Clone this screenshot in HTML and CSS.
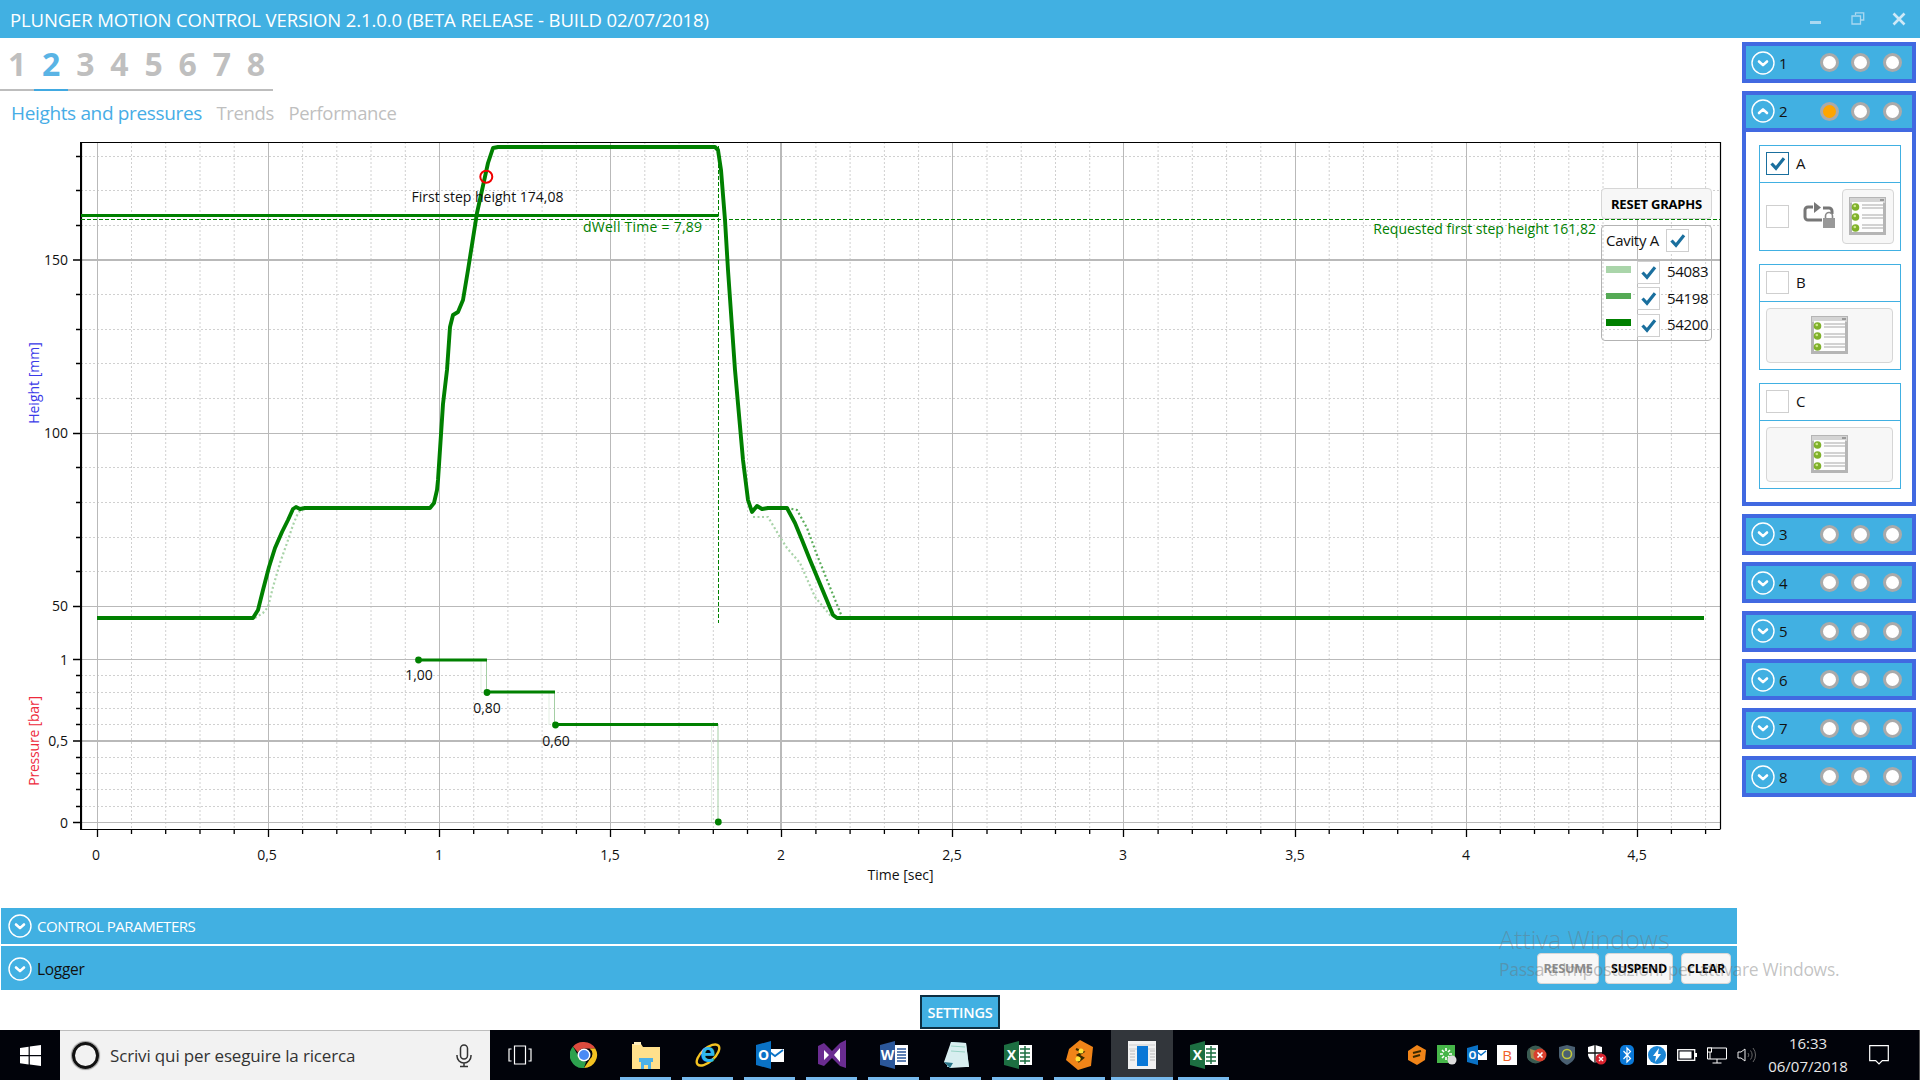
FILE: index.html
```html
<!DOCTYPE html>
<html lang="it">
<head>
<meta charset="utf-8">
<title>Plunger Motion Control</title>
<link rel="stylesheet" href="styles.css">
</head>
<body>
<svg class="defs" width="0" height="0" aria-hidden="true">
  <symbol id="chev-down" viewBox="0 0 24 24"><circle cx="12" cy="12" r="11" fill="none" stroke="#fff" stroke-width="1.4"/><path d="M8 10.5l4 3.6 4-3.6" fill="none" stroke="#fff" stroke-width="2.6" stroke-linecap="round" stroke-linejoin="round"/></symbol>
  <symbol id="chev-up" viewBox="0 0 24 24"><circle cx="12" cy="12" r="11" fill="none" stroke="#fff" stroke-width="1.4"/><path d="M8 14l4-3.6 4 3.6" fill="none" stroke="#fff" stroke-width="2.6" stroke-linecap="round" stroke-linejoin="round"/></symbol>
  <symbol id="check" viewBox="0 0 23 23"><path d="M5.5 11.5l4.5 4.8 8-10" fill="none" stroke="#1a6f9e" stroke-width="3.2"/></symbol>
  <symbol id="list" viewBox="0 0 38 38">
    <rect x="0" y="0" width="37" height="38" fill="#b5b5b5"/>
    <rect x="1" y="1" width="35" height="5" fill="#d4d4d4"/>
    <rect x="31" y="2" width="4" height="2" fill="#999"/>
    <rect x="3" y="5" width="31" height="30" fill="#fdfdfd"/>
    <path d="M13 8h21M13 11h21M13 18h21M13 21h21M13 28h21M13 31h21" stroke="#c4c4c4" stroke-width="1.4"/>
    <circle cx="6.5" cy="10" r="3.8" fill="#7fb12b"/><circle cx="6.5" cy="20" r="3.8" fill="#7fb12b"/><circle cx="6.5" cy="31" r="3.8" fill="#7fb12b"/>
    <circle cx="5.8" cy="9" r="1.3" fill="#cfe88a"/><circle cx="5.8" cy="19" r="1.3" fill="#cfe88a"/><circle cx="5.8" cy="30" r="1.3" fill="#cfe88a"/>
  </symbol>
</svg>

<div class="app">
  <header class="titlebar">
    <span class="title">PLUNGER MOTION CONTROL VERSION 2.1.0.0 (BETA RELEASE - BUILD 02/07/2018)</span>
    <div class="winctl">
      <svg width="14" height="14" viewBox="0 0 14 14"><rect x="1" y="9" width="11" height="3" fill="#a9d8f1"/></svg>
      <svg width="14" height="14" viewBox="0 0 14 14"><path d="M4.5 3V.8h8.2V8H10M1 4h8.5v8H1z" fill="none" stroke="#a9d8f1" stroke-width="1.3"/></svg>
      <svg width="14" height="14" viewBox="0 0 14 14"><path d="M1.5 1.500l11 11M12.500 1.500l-11 11" stroke="#cfe9f7" stroke-width="2.6"/></svg>
    </div>
  </header>

  <div class="main">
    <section class="content">
      <nav class="tabs">
        <span class="tab">1</span><span class="tab active">2</span><span class="tab">3</span><span class="tab">4</span><span class="tab">5</span><span class="tab">6</span><span class="tab">7</span><span class="tab">8</span>
      </nav>
      <nav class="subtabs">
        <span class="subtab active">Heights and pressures</span><span class="subtab">Trends</span><span class="subtab">Performance</span>
      </nav>

      <div class="chart">
        <svg class="plot" width="1738" height="772" viewBox="0 136 1738 772">
          <!-- minor grid -->
          <path class="grid-minor" d="M131.5 142V829M165.7 142V829M200 142V829M234.2 142V829M302.6 142V829M336.8 142V829M371 142V829M405.3 142V829M473.7 142V829M507.9 142V829M542.1 142V829M576.4 142V829M644.8 142V829M679 142V829M713.3 142V829M747.5 142V829M815.9 142V829M850.1 142V829M884.4 142V829M918.6 142V829M987 142V829M1021.2 142V829M1055.5 142V829M1089.7 142V829M1158.1 142V829M1192.3 142V829M1226.6 142V829M1260.8 142V829M1329.2 142V829M1363.4 142V829M1397.7 142V829M1431.9 142V829M1500.3 142V829M1534.5 142V829M1568.8 142V829M1603 142V829M1671.4 142V829M1705.6 142V829"/>
          <path class="grid-minor" d="M81 156.5H1720M81 190.5H1720M81 225.5H1720M81 294.5H1720M81 329.5H1720M81 363.5H1720M81 398.5H1720M81 467.5H1720M81 502.5H1720M81 537.5H1720M81 571.5H1720M81 675.5H1720M81 692.5H1720M81 708.5H1720M81 724.5H1720M81 757.5H1720M81 773.5H1720M81 789.5H1720M81 806.5H1720"/>
          <!-- major grid -->
          <path class="grid-major" d="M97.5 142V829M268.5 142V829M439.5 142V829M610.5 142V829M952.5 142V829M1123.5 142V829M1295.5 142V829M1466.5 142V829M1637.5 142V829"/>
          <path class="grid-major" d="M81 433.5H1720M81 606.5H1720M81 659.5H1720M81 822.5H1720"/>
          <path class="grid-major thick" d="M781 142V829M81 260H1720M81 741H1720"/>

          <!-- axes ticks -->
          <path class="tick" d="M73 260H81M73 433.5H81M73 606.5H81M73 659.5H81M73 741H81M73 822.5H81"/>
          <path class="tick" d="M76 156.5H81M76 190.5H81M76 225.5H81M76 294.5H81M76 329.5H81M76 363.5H81M76 398.5H81M76 467.5H81M76 502.5H81M76 537.5H81M76 571.5H81M76 675.5H81M76 692.5H81M76 708.5H81M76 724.5H81M76 757.5H81M76 773.5H81M76 789.5H81M76 806.5H81"/>
          <path class="tick" d="M97.5 829V837M268.5 829V837M439.5 829V837M610.5 829V837M781.5 829V837M952.5 829V837M1123.5 829V837M1295.5 829V837M1466.5 829V837M1637.5 829V837"/>
          <path class="tick" d="M131.5 829V834M165.7 829V834M200 829V834M234.2 829V834M302.6 829V834M336.8 829V834M371 829V834M405.3 829V834M473.7 829V834M507.9 829V834M542.1 829V834M576.4 829V834M644.8 829V834M679 829V834M713.3 829V834M747.5 829V834M815.9 829V834M850.1 829V834M884.4 829V834M918.6 829V834M987 829V834M1021.2 829V834M1055.5 829V834M1089.7 829V834M1158.1 829V834M1192.3 829V834M1226.6 829V834M1260.8 829V834M1329.2 829V834M1363.4 829V834M1397.7 829V834M1431.9 829V834M1500.3 829V834M1534.5 829V834M1568.8 829V834M1603 829V834M1671.4 829V834M1705.6 829V834"/>
          <path class="frame" d="M81 142.500H1720.500V829M81.500 142V829.500H1720.500"/>
          <path class="frame-left" d="M81 142V830"/>

          <!-- y labels -->
          <g class="ylab">
            <text x="68" y="265">150</text><text x="68" y="438">100</text><text x="68" y="611">50</text>
            <text x="68" y="665">1</text><text x="68" y="746">0,5</text><text x="68" y="828">0</text>
          </g>
          <text class="ytitle h" transform="translate(39 383) rotate(-90)">Height [mm]</text>
          <text class="ytitle p" transform="translate(39 741) rotate(-90)">Pressure [bar]</text>

          <!-- x labels -->
          <g class="xlab">
            <text x="96" y="860">0</text><text x="267" y="860">0,5</text><text x="439" y="860">1</text><text x="610" y="860">1,5</text><text x="781" y="860">2</text><text x="952" y="860">2,5</text><text x="1123" y="860">3</text><text x="1295" y="860">3,5</text><text x="1466" y="860">4</text><text x="1637" y="860">4,5</text>
            <text x="900.500" y="880">Time [sec]</text>
          </g>

          <!-- reference lines -->
          <path class="dash" d="M81 219.500H1720M718.500 146V623"/>
          <path class="dwell" d="M81 215.500H718.500"/>

          <!-- ghost traces -->
          <path class="ghost light" d="M255 618L263 613 268 607 273 587 280 563 287 543 293 525 298 513 302 509M753 517L768 517 780 537 787 548 800 563 815 597 830 615 837 618"/>
          <path class="ghost mid" d="M787 508L797 510 807 528 817 555 842 617 845 618"/>

          <!-- main trace -->
          <path class="trace" d="M97 618H253L258 610 263 590 269 567 275 548 282 532 288 520 293 509 296 507 300 509 305 508H430L434 503 437 490 438 480 443 404 447 370 450 327 453 315 458 312 463 300 468 270 477 213 488 163 493 148 498 147H715L718 150 721 170 725 220 728 270 735 370 743 460 748 500 752 512 757 506 762 509 768 508H787L795 523 802 540 810 560 833 615 837 618H1704"/>

          <!-- pressure steps -->
          <path class="step-ghost" d="M481 660V692M549 692V725M711.500 725V822"/>
          <path class="step-thin" d="M486.500 660V692M554.500 692V725M718 725V822"/>
          <path class="step" d="M418 660H487M487 692H555M555 724.500H718"/>
          <circle class="pt" cx="418.500" cy="660" r="3.400"/><circle class="pt" cx="487" cy="692.500" r="3.400"/><circle class="pt" cx="555.500" cy="725" r="3.400"/><circle class="pt" cx="718.300" cy="822" r="3.400"/>
          <g class="note">
            <text x="419" y="680">1,00</text><text x="487" y="713">0,80</text><text x="556" y="746">0,60</text>
            <text x="487.500" y="202">First step height 174,08</text>
          </g>
          <circle class="mark" cx="486.300" cy="176.800" r="6"/>
          <text class="gtext dw" x="583" y="232">dWell Time = 7,89</text>
          <text class="gtext end" x="1596" y="234">Requested first step height 161,82</text>
        </svg>

        <div class="legend-wrap">
          <button class="btn reset" type="button">RESET GRAPHS</button>
          <div class="legend">
            <div class="leg-head"><span class="leg-name">Cavity A</span><span class="cb"><svg width="23" height="23"><use href="#check"/></svg></span></div>
            <div class="leg-row"><i class="sw s1"></i><span class="cb"><svg width="23" height="23"><use href="#check"/></svg></span><span>54083</span></div>
            <div class="leg-row"><i class="sw s2"></i><span class="cb"><svg width="23" height="23"><use href="#check"/></svg></span><span>54198</span></div>
            <div class="leg-row"><i class="sw s3"></i><span class="cb"><svg width="23" height="23"><use href="#check"/></svg></span><span>54200</span></div>
          </div>
        </div>
      </div>

      <div class="expander">
        <svg width="24" height="24"><use href="#chev-down"/></svg><span class="exp-t white">CONTROL PARAMETERS</span>
      </div>
      <div class="expander logger">
        <svg width="24" height="24"><use href="#chev-down"/></svg><span class="exp-t">Logger</span>
        <div class="log-btns">
          <button class="btn off" type="button">RESUME</button><button class="btn w68" type="button">SUSPEND</button><button class="btn w50" type="button">CLEAR</button>
        </div>
      </div>
    </section>

    <aside class="sidebar">
      <div class="panel"><div class="p-head"><svg width="24" height="24"><use href="#chev-down"/></svg><span class="p-num">1</span><div class="dots"><i></i><i></i><i></i></div></div></div>

      <div class="panel open">
        <div class="p-head"><svg width="24" height="24"><use href="#chev-up"/></svg><span class="p-num">2</span><div class="dots"><i class="on"></i><i></i><i></i></div></div>
        <div class="p-body">
          <div class="card">
            <div class="c-head"><span class="cb dark"><svg width="23" height="23"><use href="#check"/></svg></span><span class="c-name">A</span></div>
            <div class="c-body">
              <span class="cb"></span>
              <svg class="loop" width="32" height="28" viewBox="0 0 32 28">
                <path d="M10 5H5a3 3 0 0 0-3 3v7a3 3 0 0 0 3 3h14M20 6h6a3 3 0 0 1 3 3v3" fill="none" stroke="#777" stroke-width="3"/>
                <path d="M11 0l7 5.500-7 5.500z" fill="#777"/>
                <path d="M22.500 16v-2a3.500 3.500 0 0 1 7 0v2" fill="none" stroke="#888" stroke-width="1.600"/>
                <rect x="20" y="16" width="12" height="10" fill="#999"/>
              </svg>
              <button class="btn icon small" type="button"><svg width="38" height="38"><use href="#list"/></svg></button>
            </div>
          </div>
          <div class="card">
            <div class="c-head"><span class="cb"></span><span class="c-name">B</span></div>
            <div class="c-body"><button class="btn icon" type="button"><svg width="38" height="38"><use href="#list"/></svg></button></div>
          </div>
          <div class="card">
            <div class="c-head"><span class="cb"></span><span class="c-name">C</span></div>
            <div class="c-body"><button class="btn icon" type="button"><svg width="38" height="38"><use href="#list"/></svg></button></div>
          </div>
        </div>
      </div>

      <div class="panel"><div class="p-head"><svg width="24" height="24"><use href="#chev-down"/></svg><span class="p-num">3</span><div class="dots"><i></i><i></i><i></i></div></div></div>
      <div class="panel"><div class="p-head"><svg width="24" height="24"><use href="#chev-down"/></svg><span class="p-num">4</span><div class="dots"><i></i><i></i><i></i></div></div></div>
      <div class="panel"><div class="p-head"><svg width="24" height="24"><use href="#chev-down"/></svg><span class="p-num">5</span><div class="dots"><i></i><i></i><i></i></div></div></div>
      <div class="panel"><div class="p-head"><svg width="24" height="24"><use href="#chev-down"/></svg><span class="p-num">6</span><div class="dots"><i></i><i></i><i></i></div></div></div>
      <div class="panel"><div class="p-head"><svg width="24" height="24"><use href="#chev-down"/></svg><span class="p-num">7</span><div class="dots"><i></i><i></i><i></i></div></div></div>
      <div class="panel"><div class="p-head"><svg width="24" height="24"><use href="#chev-down"/></svg><span class="p-num">8</span><div class="dots"><i></i><i></i><i></i></div></div></div>
    </aside>
  </div>

  <div class="settings-row"><button class="settings" type="button">SETTINGS</button></div>

  <footer class="taskbar">
    <div class="start">
      <svg width="21" height="21" viewBox="0 0 21 21"><path d="M0 3l8.600-1.200v8.200H0zM9.800 1.600L21 0v10H9.800zM0 11.200h8.600v8.200L0 18.200zM9.800 11.200H21V21L9.800 19.400z" fill="#fff"/></svg>
    </div>
    <div class="search">
      <span class="ring"></span>
      <span class="search-t">Scrivi qui per eseguire la ricerca</span>
      <svg class="mic" width="16" height="24" viewBox="0 0 16 24"><rect x="4.500" y="1" width="7" height="14" rx="3.500" fill="none" stroke="#333" stroke-width="1.500"/><path d="M1 11v1a7 7 0 0 0 14 0v-1M8 19v3M4 22.500h8" fill="none" stroke="#333" stroke-width="1.500"/></svg>
    </div>
    <div class="tb-view">
      <svg width="24" height="20" viewBox="0 0 24 20"><path d="M6.500 1h11v18h-11zM3.500 4H1v12h2.500M20.500 4H23v12h-2.500" fill="none" stroke="#fff" stroke-width="1.200"/></svg>
    </div>
    <div class="tb">
      <svg width="28" height="28" viewBox="0 0 28 28"><path d="M14 1a13 13 0 0 1 11.300 6.500H14a6.500 6.500 0 0 0-6 4L3 5.500A13 13 0 0 1 14 1z" fill="#dd4b3e"/><path d="M25.300 7.500A13 13 0 0 1 14 27l6-9a6.500 6.500 0 0 0-.5-10.500z" fill="#f3c221"/><path d="M3 5.500l5.600 10a6.500 6.500 0 0 0 7.500 5L14 27A13 13 0 0 1 3 5.500z" fill="#2da14e"/><circle cx="14" cy="14" r="6.500" fill="#fff"/><circle cx="14" cy="14" r="5" fill="#4a8af4"/></svg>
    </div>
    <div class="tb open">
      <svg width="28" height="28" viewBox="0 0 28 28"><path d="M0 3h9l2 3h17v22H0z" fill="#ffe08c"/><path d="M2 1h7v3H2z" fill="#ffeebc"/><path d="M9 17h10v11h-3v-4h-4v4H9z" fill="#4db2e8"/><path d="M7 17h14v4H7z" fill="#4db2e8"/></svg>
    </div>
    <div class="tb open">
      <svg width="30" height="30" viewBox="0 0 30 30"><ellipse cx="15" cy="15" rx="14" ry="6.500" transform="rotate(-42 15 15)" fill="none" stroke="#f3c221" stroke-width="2.400"/><text class="ie" x="15" y="22">e</text></svg>
    </div>
    <div class="tb open">
      <svg width="28" height="28" viewBox="0 0 28 28"><rect x="10" y="8" width="18" height="13" fill="#fff"/><path d="M11 9l8 6 8-6" fill="none" stroke="#0a72c6" stroke-width="1.800"/><path d="M0 4l15-4v28L0 24z" fill="#0a72c6"/><text class="ico-l" x="7.500" y="19">O</text></svg>
    </div>
    <div class="tb open">
      <svg width="28" height="30" viewBox="0 0 28 30"><path d="M0 6l6-3 8 8 8-8 6-3v28l-6-2-8-8-8 8-6-2z" fill="#6a2c91"/><path d="M6 10v10l5-5zM22 8l-6 7 6 7z" fill="#fff"/></svg>
    </div>
    <div class="tb open">
      <svg width="28" height="28" viewBox="0 0 28 28"><rect x="12" y="4" width="16" height="20" fill="#fff"/><path d="M17 8h9M17 11h9M17 14h9M17 17h9M17 20h9" stroke="#2b579a" stroke-width="1.500"/><path d="M0 4l15-4v28L0 24z" fill="#2b579a"/><text class="ico-l" x="7.500" y="18.500">W</text></svg>
    </div>
    <div class="tb open">
      <svg width="28" height="30" viewBox="0 0 28 30"><path d="M9 2l15 1 3 24-22 0z" fill="#9fd0d8"/><path d="M9 2L2 22l6 6 16-1L27 27 24 3z" fill="#d8eef0"/><path d="M9 6l14 1M9 11l14 1" stroke="#8cb" stroke-width=".8"/><path d="M2 22l6 6 3-5z" fill="#28758a"/></svg>
    </div>
    <div class="tb open">
      <svg width="28" height="28" viewBox="0 0 28 28"><rect x="12" y="4" width="16" height="20" fill="#fff"/><path d="M16 8h10M16 12h10M16 16h10M16 20h10M21 5v18" stroke="#1d6f42" stroke-width="1.500"/><path d="M0 4l15-4v28L0 24z" fill="#1d6f42"/><text class="ico-l" x="7.500" y="18.500">X</text></svg>
    </div>
    <div class="tb open">
      <svg width="30" height="30" viewBox="0 0 30 30"><path d="M15 0l13 7-2 19-13 4L1 20 4 9z" fill="#f08418"/><path d="M11 9l7 3-5 3 5 3-5 4" fill="none" stroke="#3a2a00" stroke-width="2.200"/><circle cx="16" cy="11" r="2.500" fill="#ffe23a"/><circle cx="13" cy="19" r="2.500" fill="#ffe23a"/></svg>
    </div>
    <div class="tb open active">
      <svg width="28" height="28" viewBox="0 0 28 28"><rect width="28" height="28" fill="#f1f1f1"/><path d="M1 4h26M1 8h26" stroke="#ccc"/><rect x="9" y="5" width="11" height="20" fill="#0a78d7"/><path d="M2 10h5M2 13h5M2 16h5M2 19h5M22 10h5M22 13h5M22 16h5M22 19h5" stroke="#bbb"/></svg>
    </div>
    <div class="tb open">
      <svg width="28" height="28" viewBox="0 0 28 28"><rect x="12" y="4" width="16" height="20" fill="#fff"/><path d="M16 8h10M16 12h10M16 16h10M16 20h10M21 5v18" stroke="#1d6f42" stroke-width="1.500"/><path d="M0 4l15-4v28L0 24z" fill="#1d6f42"/><text class="ico-l" x="7.500" y="18.500">X</text></svg>
    </div>

    <div class="tray">
      <span class="ti"><svg width="20" height="20" viewBox="0 0 20 20"><path d="M10 0l9 5-1 10-8 5-9-5V6z" fill="#f08418"/><path d="M6 8l8-2M6 12l7-2" stroke="#3a2a00" stroke-width="2"/></svg></span>
      <span class="ti"><svg width="20" height="20" viewBox="0 0 20 20"><rect width="18" height="18" fill="#46b649"/><path d="M9 3v3M9 12v3M3 9h3M12 9h3M5 5l2 2M11 11l2 2M13 5l-2 2M7 11l-2 2" stroke="#fff" stroke-width="1.600"/><circle cx="15" cy="15" r="4.500" fill="#ddd"/></svg></span>
      <span class="ti"><svg width="20" height="20" viewBox="0 0 20 20"><rect x="8" y="5" width="12" height="10" fill="#fff"/><path d="M9 6l5 4 5-4" fill="none" stroke="#0a72c6" stroke-width="1.400"/><path d="M0 3l11-3v20L0 17z" fill="#0a72c6"/><text class="ico-s" x="5.500" y="13.500">O</text></svg></span>
      <span class="ti"><svg width="20" height="20" viewBox="0 0 20 20"><rect width="20" height="20" fill="#fff"/><text class="ico-b" x="10" y="15.500">B</text></svg></span>
      <span class="ti"><svg width="20" height="20" viewBox="0 0 20 20"><circle cx="8.500" cy="9.500" r="9" fill="#3a5b52"/><path d="M3 4l7 2-3 5 3 5-6-3z" fill="#a98b4e"/><circle cx="13" cy="10" r="6.500" fill="#d9402e"/><path d="M10.500 7.500l5 5M15.500 7.500l-5 5" stroke="#fff" stroke-width="1.600"/></svg></span>
      <span class="ti"><svg width="18" height="20" viewBox="0 0 18 20"><path d="M1 2l8-2 8 2v9c0 4-4 7-8 9-4-2-8-5-8-9z" fill="#4a6072"/><circle cx="9" cy="9" r="4.500" fill="none" stroke="#c3c83c" stroke-width="1.600"/></svg></span>
      <span class="ti"><svg width="20" height="20" viewBox="0 0 20 20"><path d="M1 2l7-2 7 2v7c0 4-3 7-7 9-4-2-7-5-7-9z" fill="#fff"/><path d="M8 0v18M1 8h14" stroke="#111" stroke-width="1.300"/><circle cx="14" cy="14" r="5.500" fill="#d9232e"/><path d="M12 12l4 4M16 12l-4 4" stroke="#fff" stroke-width="1.400"/></svg></span>
      <span class="ti"><svg width="14" height="20" viewBox="0 0 14 20"><rect width="14" height="20" rx="5" fill="#0a78d7"/><path d="M3.500 6l7 7.500L7 17V3l3.500 3.500-7 7.500" fill="none" stroke="#fff" stroke-width="1.200"/></svg></span>
      <span class="ti"><svg width="20" height="20" viewBox="0 0 20 20"><rect width="20" height="20" fill="#fff"/><circle cx="10" cy="10" r="9" fill="#1b86d6"/><path d="M12 3L6 11h3l-1 6 6-8h-3z" fill="#fff"/></svg></span>
      <span class="ti"><svg width="20" height="12" viewBox="0 0 20 12"><rect x=".7" y=".7" width="17" height="10.600" fill="none" stroke="#fff" stroke-width="1.300"/><rect x="2.500" y="2.500" width="12" height="7" fill="#fff"/><rect x="18" y="4" width="2" height="4" fill="#fff"/></svg></span>
      <span class="ti"><svg width="20" height="17" viewBox="0 0 20 17"><path d="M.5 1h19v11H.5zM3 12V4M5.500 16h9M10 12v4" fill="none" stroke="#fff" stroke-width="1"/><rect x=".5" y="1" width="4" height="4" fill="#000" stroke="#fff"/></svg></span>
      <span class="ti"><svg width="20" height="16" viewBox="0 0 20 16"><path d="M1 5h3l4-3v12l-4-3H1z" fill="none" stroke="#eee"/><path d="M11 6a3 3 0 0 1 0 4M13.500 3.500a7 7 0 0 1 0 9M16 1a11 11 0 0 1 0 14" fill="none" stroke="#666"/></svg></span>
    </div>
    <div class="clock"><span>16:33</span><span>06/07/2018</span></div>
    <div class="notif"><svg width="20" height="20" viewBox="0 0 20 20"><path d="M.7.7h18.600v15h-6L10 19l-3.300-3.300h-6z" fill="none" stroke="#fff" stroke-width="1.200"/></svg></div>
    <div class="desk"></div>
  </footer>

  <div class="watermark"><span class="wm1">Attiva Windows</span><span class="wm2">Passa a Impostazioni per attivare Windows.</span></div>
</div>
</body>
</html>
```

FILE: styles.css
```css
* { box-sizing: border-box; }
html, body { margin: 0; padding: 0; height: 100%; background: #fff; }
body { font-family: "Open Sans", "Noto Sans", sans-serif; color: #111; overflow: hidden; }
.defs { position: absolute; }
svg { display: block; flex: none; }

.app { width: 1920px; height: 1080px; display: flex; flex-direction: column; position: relative; }

.titlebar { height: 38px; background: #41b0e2; display: flex; align-items: center; justify-content: space-between; padding-left: 10px; flex: none; }
.title { color: #fff; font-size: 18.500px; letter-spacing: -.11px; white-space: nowrap; }
.winctl { display: flex; gap: 27.500px; padding-right: 14px; }

.main { display: flex; height: 952px; flex: none; }
.content { width: 1738px; flex: none; }

.tabs { display: flex; width: 273px; height: 53px; }
.tab { width: 34.130px; text-align: center; font-size: 32px; line-height: 51px; font-weight: 700; color: #bfbfbf; border-bottom: 2px solid #bdbdbd; height: 53px; }
.tab.active { color: #5ab4e5; border-bottom-color: #41a9e1; }

.subtabs { display: flex; height: 43px; margin-bottom: 2px; padding-left: 11px; gap: 14.500px; align-items: center; }
.subtab { font-size: 18.500px; letter-spacing: -.35px; color: #bfbfbf; }
.subtab.active { color: #47ade6; font-size: 19px; letter-spacing: -.35px; }

.chart { position: relative; height: 772px; }
.plot { width: 1738px; height: 772px; }
.grid-minor { fill: none; stroke: #d0d0d0; stroke-width: 1; stroke-dasharray: 2 2; }
.grid-major { fill: none; stroke: #b9b9b9; stroke-width: 1; }
.grid-major.thick { stroke-width: 2; }
.tick { fill: none; stroke: #000; stroke-width: 1.300; }
.frame { fill: none; stroke: #000; stroke-width: 1.200; }
.frame-left { fill: none; stroke: #000; stroke-width: 2; }
.ylab text { font-size: 14px; text-anchor: end; fill: #111; }
.xlab text { font-size: 14px; text-anchor: middle; fill: #111; }
.ytitle { font-size: 14px; text-anchor: middle; }
.ytitle.h { fill: #3a3ae8; }
.ytitle.p { fill: #ee2a3c; letter-spacing: -.2px; }
.dash { fill: none; stroke: #008000; stroke-width: 1; stroke-dasharray: 4 2; }
.dwell { fill: none; stroke: #008000; stroke-width: 3.200; }
.ghost { fill: none; stroke-width: 2.200; stroke-dasharray: 2 2.500; }
.ghost.light { stroke: #a9d3a9; }
.ghost.mid { stroke: #5bad5b; }
.trace { fill: none; stroke: #008000; stroke-width: 3.900; stroke-linejoin: round; }
.step { fill: none; stroke: #008000; stroke-width: 3; }
.step-thin { fill: none; stroke: #a5cfa5; stroke-width: 1; }
.step-ghost { fill: none; stroke: #e3f0e3; stroke-width: 1; }
.pt { fill: #008000; }
.note text { font-size: 14px; text-anchor: middle; fill: #111; }
.mark { fill: none; stroke: #f00000; stroke-width: 2; }
.gtext { font-size: 14px; fill: #008000; }
.gtext.dw { letter-spacing: .25px; }
.gtext.end { text-anchor: end; }

.btn { font-family: "Open Sans", "Noto Sans", sans-serif; font-weight: 700; font-size: 13px; letter-spacing: -.2px; color: #000; background: #f7f7f7; border: 1px solid #d6d6d6; border-radius: 4px; padding: 0; display: flex; align-items: center; justify-content: center; white-space: nowrap; }

.legend-wrap { position: absolute; left: 1601px; top: 52px; width: 111px; }
.reset { width: 111px; height: 31px; margin-bottom: 6px; }
.legend { height: 116px; border: 1px solid #b3b3b3; border-radius: 4px; padding: 3px 4px; font-size: 15px; letter-spacing: -.3px; }
.leg-head { display: flex; align-items: center; justify-content: space-between; height: 23px; padding-right: 18px; margin-bottom: 7px; }
.leg-name { margin-top: -2px; }
.leg-row { display: flex; align-items: center; height: 26.500px; }
.leg-row span:last-child { margin-left: 7px; margin-top: -2px; }
.sw { width: 25px; height: 6.500px; margin-right: 6px; margin-top: -6px; flex: none; }
.s1 { background: #aad5aa; }
.s2 { background: #55aa55; }
.s3 { background: #008000; }
.cb { width: 23px; height: 23px; border: 1px solid #cfcfcf; background: #fff; display: block; flex: none; position: relative; }
.cb svg { margin: -1px; }
.cb.dark { border: 1.500px solid #1a6f9e; }
.cb.dark svg { margin: -1.500px; }

.expander { margin-left: 1px; width: 1736px; height: 36px; background: #41b0e2; display: flex; align-items: center; padding-left: 7px; }
.expander.logger { height: 44px; margin-top: 2px; padding-top: 1px; }
.exp-t { font-size: 15.500px; margin-left: 5px; letter-spacing: -.3px; color: #111; }
.exp-t.white { color: #fff; font-size: 15px; letter-spacing: -.45px; }
.log-btns { margin-left: auto; display: flex; gap: 6px; padding-right: 6px; }
.log-btns .btn { width: 62px; height: 31px; font-size: 12.500px; }
.log-btns .btn.w68 { width: 68px; }
.log-btns .btn.w50 { width: 50px; margin-left: 2px; }
.log-btns .btn.off { color: #8c8c8c; }

.sidebar { width: 174px; margin-left: 4px; padding-top: 4px; display: flex; flex-direction: column; gap: 7.500px; flex: none; }
.panel { border: 4px solid #4169e1; background: #41b0e2; height: 41px; flex: none; }
.panel.open { height: 415.500px; background: #fff; }
.p-head { height: 33px; background: #41b0e2; display: flex; align-items: center; padding-left: 5px; }
.p-num { margin-left: 4px; font-size: 15px; color: #111; }
.dots { display: flex; gap: 12.500px; margin-left: auto; padding-right: 10.500px; }
.dots i { width: 19px; height: 19px; border-radius: 50%; background: #fff; border: 3px solid #aaa; }
.dots i.on { background: #ffa500; }
.p-body { border-top: 4px solid #4169e1; padding: 13px 11px 0 13px; display: flex; flex-direction: column; gap: 13px; }
.card { height: 106px; border: 1px solid #41b0e2; background: #fff; }
.c-head { height: 37px; border-bottom: 1px solid #41b0e2; display: flex; align-items: center; padding-left: 6px; gap: 7px; font-size: 15px; }
.c-name { margin-top: -2px; }
.c-body { height: 67px; padding: 6px; display: flex; align-items: center; }
.loop { margin-left: 14px; }
.btn.icon { width: 127px; height: 55px; }
.btn.icon.small { width: 52px; margin-left: auto; }

.settings-row { height: 40px; display: flex; justify-content: center; align-items: flex-end; padding-bottom: 1px; flex: none; }
.settings { width: 80px; height: 34px; background: #41b0e2; border: 2px solid #0c2f42; color: #fff; font-family: "Open Sans", sans-serif; font-weight: 600; font-size: 14.500px; letter-spacing: -.2px; padding: 0; }

.taskbar { height: 50px; background: #01030a; display: flex; align-items: stretch; flex: none; color: #eee; }
.start { width: 60px; display: flex; align-items: center; justify-content: center; }
.search { width: 430px; background: #f2f2f2; border-top: 1px solid #bdbdbd; display: flex; align-items: center; padding-left: 12px; padding-right: 18px; }
.ring { width: 27px; height: 27px; border-radius: 50%; border: 3.500px solid #111; box-shadow: 0 0 1px 1px #999; flex: none; }
.search-t { margin-left: 11px; font-size: 17px; color: #333; letter-spacing: -.15px; white-space: nowrap; }
.mic { margin-left: auto; }
.tb-view { width: 63px; display: flex; align-items: center; justify-content: center; padding-right: 4px; }
.tb { width: 62px; display: flex; align-items: center; justify-content: center; }
.tb.open { background: linear-gradient(#76b9ed, #76b9ed) no-repeat 5px bottom / 51px 3px; }
.tb.active { background: #32363b linear-gradient(#76b9ed, #76b9ed) no-repeat 0 bottom / 62px 3px; }
.ie { font-size: 26px; font-weight: 700; fill: #2fb7ee; text-anchor: middle; }
.ico-l { font-size: 14px; font-weight: 700; fill: #fff; text-anchor: middle; }
.ico-s { font-size: 10px; font-weight: 700; fill: #fff; text-anchor: middle; }
.ico-b { font-size: 15px; fill: #f0602a; text-anchor: middle; }
.tray { margin-left: auto; display: flex; }
.ti { width: 30px; display: flex; align-items: center; justify-content: center; }
.clock { width: 92px; display: flex; flex-direction: column; align-items: center; justify-content: center; gap: 4px; font-size: 15px; line-height: 19px; color: #e8e8e8; }
.notif { width: 50px; display: flex; align-items: center; justify-content: center; }
.desk { width: 16px; border-right: 1px solid #555; }

.watermark { position: absolute; left: 1499px; top: 924px; display: flex; flex-direction: column; pointer-events: none; color: rgba(110, 110, 110, .42); white-space: nowrap; }
.wm1 { font-size: 25px; line-height: 30px; font-weight: 300; }
.wm2 { font-size: 17.500px; line-height: 24px; margin-top: 3px; letter-spacing: -.3px; }
```
